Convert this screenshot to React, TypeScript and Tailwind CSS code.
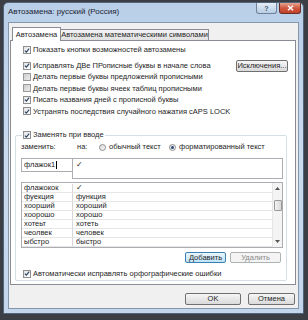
import React from "react";

function Check({ on }: { on: boolean }) {
  return (
    <span
      className={
        on
          ? "w-[8px] h-[8px] border border-[#8f8f8f] flex items-center justify-center shrink-0 bg-gradient-to-br from-[#e4e4e4] to-[#ffffff]"
          : "w-[8px] h-[8px] border border-[#9a9a9a] flex items-center justify-center shrink-0 bg-gradient-to-br from-[#cdcdcd] to-[#ededed]"
      }
    >
      {on && (
        <svg width="7" height="7" viewBox="0 0 7 7" className="block">
          <path d="M1 3.6 L2.8 5.4 L6 1.2" fill="none" stroke="#33476b" strokeWidth="1.4" />
        </svg>
      )}
    </span>
  );
}

function CRow({ on, text, className }: { on: boolean; text: string; className?: string }) {
  return (
    <div className={"flex items-center gap-[2px] " + (className ?? "")}>
      <Check on={on} />
      <span className="whitespace-nowrap">{text}</span>
    </div>
  );
}

function Radio({ on }: { on: boolean }) {
  return (
    <span className="w-[7px] h-[7px] rounded-full border border-[#8f8f8f] bg-gradient-to-br from-[#d8d8d8] to-[#fafafa] flex items-center justify-center shrink-0">
      {on && <span className="w-[3px] h-[3px] rounded-full bg-[#2d4a78]" />}
    </span>
  );
}

const rows: [string, string][] = [
  ["флажокок", "✓"],
  ["фуекция", "функция"],
  ["хоорший", "хороший"],
  ["хоорошо", "хорошо"],
  ["хотеьт", "хотеть"],
  ["чеолвек", "человек"],
  ["ыбстро", "быстро"],
];

export default function App() {
  return (
    <div className="w-[308px] h-[320px] overflow-hidden bg-[#3b3e44] pt-[2px] pl-[3px] font-['Liberation_Sans',Arial,sans-serif] text-[7.5px] leading-none text-[#1e1e1e]">
      <div className="w-[301px] h-[312px] rounded-t-[5px] border border-[#52647a] bg-gradient-to-b from-[#b9cfe8] via-[#cadbef] to-[#c3d6ec] flex flex-col px-[4px] pb-[4px]">
        {/* Title bar */}
        <div className="h-[19px] flex items-start shrink-0">
          <span className="mt-[5px] text-[8px] text-[#1b2433] whitespace-nowrap">Автозамена: русский (Россия)</span>
          <div className="ml-auto flex gap-[2px] -mr-[2px]">
            <div className="w-[21px] h-[11px] rounded-b-[3px] border border-t-0 border-[#6f829a] bg-gradient-to-b from-[#e4edf7] to-[#b9cde4] flex items-center justify-center text-[7px] font-bold text-[#44556d]">
              ?
            </div>
            <div className="w-[22px] h-[11px] rounded-b-[3px] border border-t-0 border-[#6b2f2a] bg-gradient-to-b from-[#e6a493] via-[#d0583f] to-[#c2402b] flex items-center justify-center">
              <svg width="7" height="6" viewBox="0 0 7 6" className="block">
                <path d="M1 0.8 L6 5.2 M6 0.8 L1 5.2" stroke="#ffffff" strokeWidth="1.5" />
              </svg>
            </div>
          </div>
        </div>

        {/* Client area */}
        <div className="flex-1 bg-[#f0f0f0] border border-[#8497ad] flex flex-col pt-[4px] pl-[1px] pr-[2px]">
          {/* Tabs */}
          <div className="h-[13px] flex items-end shrink-0">
            <div className="ml-[2px] w-[49px] h-[14px] -mb-[1px] relative z-10 bg-white border border-b-0 border-[#898c95] flex items-center justify-center whitespace-nowrap">
              Автозамена
            </div>
            <div className="w-[148px] h-[11px] border border-l-0 border-b-0 border-[#898c95] bg-gradient-to-b from-[#f3f3f3] to-[#e1e1e1] flex items-center justify-center whitespace-nowrap">
              Автозамена математическими символами
            </div>
          </div>

          {/* Panel */}
          <div className="h-[245px] bg-white border border-[#898c95] flex flex-col pl-[12px] pt-[4px] shrink-0">
            <CRow on={true} text="Показать кнопки возможностей автозамены" className="h-[10px]" />
            <div className="mt-[5px] h-[11px] flex items-center mr-[7px]">
              <CRow on={true} text="Исправлять ДВе ПРописные буквы в начале слова" />
              <div className="ml-auto w-[52px] h-[12px] border border-[#707070] rounded-[2px] bg-gradient-to-b from-[#f6f6f6] to-[#dadada] flex items-center justify-center whitespace-nowrap">
                Исключения...
              </div>
            </div>
            <CRow on={false} text="Делать первые буквы предложений прописными" className="h-[11.5px]" />
            <CRow on={false} text="Делать первые буквы ячеек таблиц прописными" className="h-[11.5px]" />
            <CRow on={true} text="Писать названия дней с прописной буквы" className="h-[11.5px]" />
            <CRow on={true} text="Устранять последствия случайного нажатия cAPS LOCK" className="h-[11.5px]" />

            {/* Group */}
            <div className="mt-[18px] -ml-[8px] mr-[8px] border border-[#d5dfe5] rounded-[2px] flex flex-col pl-[5px] pr-[3px] pb-[2px]">
              <div className="-mt-[6px] h-[10px] ml-[1px] self-start bg-white px-[1px] flex items-center">
                <CRow on={true} text="Заменять при вводе" />
              </div>
              <div className="mt-[1px] h-[12px] flex items-center whitespace-nowrap">
                <span className="w-[56px]">заменить:</span>
                <span className="w-[22px]">на:</span>
                <div className="w-[70px] flex items-center gap-[3px]">
                  <Radio on={false} />
                  <span>обычный текст</span>
                </div>
                <div className="flex items-center gap-[3px]">
                  <Radio on={true} />
                  <span>форматированный текст</span>
                </div>
              </div>
              <div className="mt-[5px] flex items-start h-[21px]">
                <div className="w-[52px] h-[14px] border border-[#abadb3] bg-white flex items-center pl-[2px] whitespace-nowrap">
                  флажок1<span className="w-px h-[8px] bg-black ml-[1px]" />
                </div>
                <div className="flex-1 h-[21px] -ml-px border border-[#abadb3] bg-white pl-[3px] pt-[2px]">✓</div>
              </div>
              <div className="mt-[3px] h-[66px] border border-[#abadb3] bg-white flex">
                <div className="flex-1 flex flex-col pt-[1px]">
                  {rows.map(([a, b]) => (
                    <div key={a} className="h-[9px] flex border-b border-[#e6e6e6]">
                      <div className="w-[51px] pl-[2px] border-r border-[#d6d6d6] flex items-center whitespace-nowrap">{a}</div>
                      <div className="flex-1 pl-[3px] flex items-center whitespace-nowrap">{b}</div>
                    </div>
                  ))}
                </div>
                <div className="w-[10px] bg-[#f4f4f4] border-l border-[#e6e6e6] flex flex-col items-center">
                  <svg width="5" height="3" viewBox="0 0 5 3" className="block mt-[4px]">
                    <path d="M0 3 L2.5 0 L5 3 Z" fill="#555" />
                  </svg>
                  <div className="mt-[10px] w-[8px] h-[11px] rounded-[1px] border border-[#9a9a9a] bg-gradient-to-r from-[#f2f2f2] to-[#d9d9d9]" />
                  <svg width="5" height="3" viewBox="0 0 5 3" className="block mt-auto mb-[4px]">
                    <path d="M0 0 L5 0 L2.5 3 Z" fill="#555" />
                  </svg>
                </div>
              </div>
              <div className="mt-[4px] h-[11px] flex justify-end gap-[4px] mr-[2px]">
                <div className="w-[41px] h-[11px] border border-[#3c7fb1] rounded-[2px] bg-gradient-to-b from-[#eaf6fd] to-[#bfe3f9] flex items-center justify-center">
                  Добавить
                </div>
                <div className="w-[51px] h-[11px] border border-[#adb2b5] rounded-[2px] bg-[#f4f4f4] text-[#8a8a8a] flex items-center justify-center">
                  Удалить
                </div>
              </div>
              <CRow on={true} text="Автоматически исправлять орфографические ошибки" className="mt-[6px] h-[9px] ml-[2px]" />
            </div>
          </div>

          {/* Bottom buttons */}
          <div className="mt-[8px] h-[12px] flex justify-end gap-[7px] mr-[1px]">
            <div className="w-[56px] h-[12px] border border-[#707070] rounded-[2px] bg-gradient-to-b from-[#f6f6f6] to-[#dadada] flex items-center justify-center">
              OK
            </div>
            <div className="w-[47px] h-[12px] border border-[#707070] rounded-[2px] bg-gradient-to-b from-[#f6f6f6] to-[#dadada] flex items-center justify-center">
              Отмена
            </div>
          </div>
        </div>
      </div>
    </div>
  );
}
